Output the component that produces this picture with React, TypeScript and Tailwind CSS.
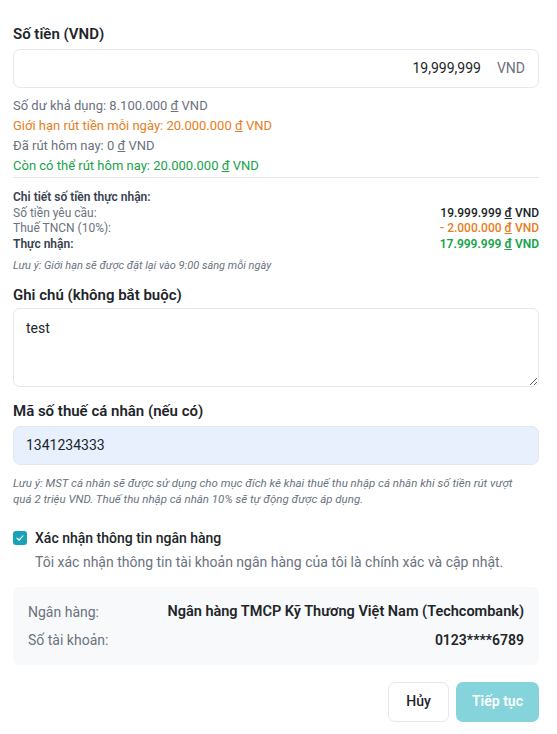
import React from "react";

const D = () => <span className="underline">đ</span>;

export default function App() {
  return (
    <div className="min-h-[734px] bg-white pl-[13px] pr-[18px] pt-[24px] text-[#212529]" style={{ fontFamily: "Roboto, 'Noto Sans', sans-serif" }}>
      <label className="block text-[15px] font-semibold leading-[20px] mb-[5px]">Số tiền (VND)</label>
      <div className="flex items-center justify-end h-[39px] rounded-[7px] border border-[#e5e7eb] pr-[13px]">
        <input readOnly defaultValue="19,999,999" className="flex-1 min-w-0 text-right text-[14px] outline-none bg-transparent" />
        <span className="ml-[16px] text-[14px] text-[#6b7280]">VND</span>
      </div>
      <div className="mt-[8px] text-[13px] leading-[20px]">
        <div className="text-[#6b7280]">Số dư khả dụng: 8.100.000 <D /> VND</div>
        <div className="text-[#e67e22]">Giới hạn rút tiền mỗi ngày: 20.000.000 <D /> VND</div>
        <div className="text-[#6b7280]">Đã rút hôm nay: 0 <D /> VND</div>
        <div className="text-[#16a34a]">Còn có thể rút hôm nay: 20.000.000 <D /> VND</div>
      </div>
      <div className="mt-[1px] border-t border-[#e5e7eb] pt-[12px] text-[12px] leading-[15.5px]">
        <div className="font-semibold text-[#374151]">Chi tiết số tiền thực nhận:</div>
        <div className="flex justify-between text-[#6b7280]">
          <span>Số tiền yêu cầu:</span>
          <span className="font-medium text-[#212529]">19.999.999 <D /> VND</span>
        </div>
        <div className="flex justify-between text-[#6b7280]">
          <span>Thuế TNCN (10%):</span>
          <span className="font-medium text-[#e67e22]">- 2.000.000 <D /> VND</span>
        </div>
        <div className="flex justify-between font-semibold text-[#374151]">
          <span>Thực nhận:</span>
          <span className="text-[#16a34a]">17.999.999 <D /> VND</span>
        </div>
        <div className="mt-[6px] text-[11px] italic text-[#6b7280]">Lưu ý: Giới hạn sẽ được đặt lại vào 9:00 sáng mỗi ngày</div>
      </div>
      <label className="block mt-[11px] text-[15px] font-semibold leading-[20px] mb-[3px]">Ghi chú (không bắt buộc)</label>
      <textarea readOnly defaultValue="test" className="block w-full h-[79px] rounded-[7px] border border-[#e5e7eb] px-[12px] py-[9px] text-[14px] outline-none" />
      <label className="block mt-[14px] text-[15px] font-semibold leading-[20px] mb-[5px]">Mã số thuế cá nhân (nếu có)</label>
      <input readOnly defaultValue="1341234333" className="block w-full h-[39px] rounded-[7px] border border-[#e5e7eb] bg-[#e8f0fe] px-[12px] text-[14px] outline-none" />
      <p className="mt-[10px] pr-[12px] text-[11.5px] italic leading-[16px] text-[#6b7280]">
        Lưu ý: MST cá nhân sẽ được sử dụng cho mục đích kê khai thuế thu nhập cá nhân khi số tiền rút vượt quá 2 triệu VND. Thuế thu nhập cá nhân 10% sẽ tự động được áp dụng.
      </p>
      <div className="mt-[21px] flex items-center gap-[8px]">
        <div className="flex h-[14px] w-[14px] items-center justify-center rounded-[3px] bg-[#17a2b8]">
          <svg viewBox="0 0 12 12" className="h-[10px] w-[10px]" fill="none" stroke="white" strokeWidth="1.6" strokeLinecap="round" strokeLinejoin="round">
            <path d="M2.5 6.2 5 8.5 9.5 3.5" />
          </svg>
        </div>
        <span className="text-[14px] font-medium">Xác nhận thông tin ngân hàng</span>
      </div>
      <p className="ml-[22px] mt-[3px] text-[14px] text-[#6b7280]">Tôi xác nhận thông tin tài khoản ngân hàng của tôi là chính xác và cập nhật.</p>
      <div className="mt-[14px] rounded-[7px] bg-[#f8f9fa] px-[15px] py-[15px] text-[14px] leading-[20px]">
        <div className="flex justify-between">
          <span className="text-[#6b7280]">Ngân hàng:</span>
          <span className="font-semibold text-[14.5px]">Ngân hàng TMCP Kỹ Thương Việt Nam (Techcombank)</span>
        </div>
        <div className="mt-[8px] flex justify-between">
          <span className="text-[#6b7280]">Số tài khoản:</span>
          <span className="font-semibold">0123****6789</span>
        </div>
      </div>
      <div className="mt-[17px] flex justify-end gap-[7px]">
        <button className="h-[40px] w-[61px] rounded-[7px] border border-[#e5e7eb] bg-white text-[14px] font-medium">Hủy</button>
        <button className="h-[40px] w-[83px] rounded-[7px] bg-[#85d4dc] text-[14px] font-semibold text-white">Tiếp tục</button>
      </div>
    </div>
  );
}
